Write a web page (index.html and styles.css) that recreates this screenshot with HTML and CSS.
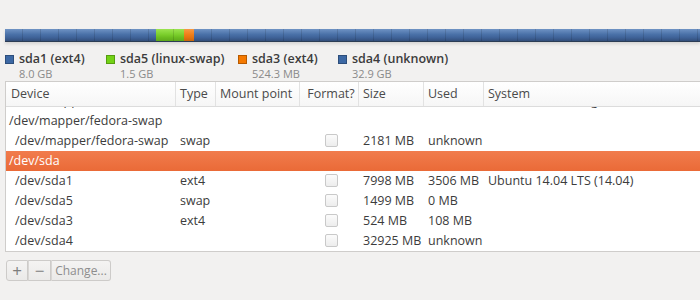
FILE: index.html
```html
<!DOCTYPE html>
<html>
<head>
<meta charset="utf-8">
<link rel="stylesheet" href="styles.css">
</head>
<body>
<div class="page">
  <div class="bar">
    <div class="seg blue" style="width:151px"></div>
    <div class="seg green" style="width:28px"></div>
    <div class="seg orange" style="width:10px"></div>
    <div class="seg blue grow"></div>
  </div>
  <div class="legend">
    <div class="item" style="width:101px">
      <span class="sw blue"></span>
      <div class="lbl"><div class="name">sda1 (ext4)</div><div class="size">8.0 GB</div></div>
    </div>
    <div class="item" style="width:132px">
      <span class="sw green"></span>
      <div class="lbl"><div class="name">sda5 (linux-swap)</div><div class="size">1.5 GB</div></div>
    </div>
    <div class="item" style="width:100px">
      <span class="sw orange"></span>
      <div class="lbl"><div class="name">sda3 (ext4)</div><div class="size">524.3 MB</div></div>
    </div>
    <div class="item">
      <span class="sw blue"></span>
      <div class="lbl"><div class="name">sda4 (unknown)</div><div class="size">32.9 GB</div></div>
    </div>
  </div>
  <div class="table">
    <div class="row head">
      <div class="c dev">Device</div>
      <div class="c typ">Type</div>
      <div class="c mnt">Mount point</div>
      <div class="c fmt">Format?</div>
      <div class="c siz">Size</div>
      <div class="c usd">Used</div>
      <div class="c sys">System</div>
    </div>
    <div class="body">
      <div class="rows">
        <div class="row">
          <div class="c dev ind">/dev/mapper/fedora-root</div>
          <div class="c typ"></div>
          <div class="c mnt"></div>
          <div class="c fmt"></div>
          <div class="c siz"></div>
          <div class="c usd"></div>
          <div class="c sys">Fedora (Heisenbug) (20)</div>
        </div>
        <div class="row">
          <div class="c dev">/dev/mapper/fedora-swap</div>
        </div>
        <div class="row">
          <div class="c dev ind">/dev/mapper/fedora-swap</div>
          <div class="c typ">swap</div>
          <div class="c mnt"></div>
          <div class="c fmt"><span class="cb"></span></div>
          <div class="c siz">2181 MB</div>
          <div class="c usd">unknown</div>
          <div class="c sys"></div>
        </div>
        <div class="row sel">
          <div class="c dev">/dev/sda</div>
        </div>
        <div class="row">
          <div class="c dev ind">/dev/sda1</div>
          <div class="c typ">ext4</div>
          <div class="c mnt"></div>
          <div class="c fmt"><span class="cb"></span></div>
          <div class="c siz">7998 MB</div>
          <div class="c usd">3506 MB</div>
          <div class="c sys">Ubuntu 14.04 LTS (14.04)</div>
        </div>
        <div class="row">
          <div class="c dev ind">/dev/sda5</div>
          <div class="c typ">swap</div>
          <div class="c mnt"></div>
          <div class="c fmt"><span class="cb"></span></div>
          <div class="c siz">1499 MB</div>
          <div class="c usd">0 MB</div>
          <div class="c sys"></div>
        </div>
        <div class="row">
          <div class="c dev ind">/dev/sda3</div>
          <div class="c typ">ext4</div>
          <div class="c mnt"></div>
          <div class="c fmt"><span class="cb"></span></div>
          <div class="c siz">524 MB</div>
          <div class="c usd">108 MB</div>
          <div class="c sys"></div>
        </div>
        <div class="row">
          <div class="c dev ind">/dev/sda4</div>
          <div class="c typ"></div>
          <div class="c mnt"></div>
          <div class="c fmt"><span class="cb"></span></div>
          <div class="c siz">32925 MB</div>
          <div class="c usd">unknown</div>
          <div class="c sys"></div>
        </div>
      </div>
    </div>
  </div>
  <div class="buttons">
    <div class="btn sq">+</div>
    <div class="btn sq">−</div>
    <div class="btn txt">Change...</div>
  </div>
</div>
</body>
</html>
```
FILE: styles.css
```css
html, body {
  margin: 0;
  padding: 0;
  background: #f2f1f0;
  width: 700px;
  height: 300px;
  overflow: hidden;
}
.page {
  font-family: "Open Sans", "DejaVu Sans", sans-serif;
  font-size: 12.5px;
  color: #3c3c3c;
  padding: 29px 0 0 5px;
}
.bar {
  display: flex;
  height: 12px;
  border-bottom: 1px solid #2c3d55;
  box-shadow: 0 2px 3px rgba(0,0,0,0.12);
}
.seg {
  height: 12px;
  background-image: repeating-linear-gradient(90deg, transparent 0 17px, rgba(0,0,0,0.12) 17px 18px),
    linear-gradient(#6f93c4, #4a71a8 45%, #3f6399 70%, #334f7a);
}
.seg.green {
  background-image: repeating-linear-gradient(90deg, transparent 0 17px, rgba(0,0,0,0.12) 17px 18px),
    linear-gradient(#9be34f, #7ccf2d 45%, #6bbd20 70%, #5ea81b);
}
.seg.orange {
  background-image: linear-gradient(#f69a44, #f07f1a 45%, #e47410 70%, #c9650c);
}
.seg.grow { flex: 1; }
.legend {
  display: flex;
  margin-top: 8px;
  height: 31px;
}
.item {
  display: flex;
  gap: 5px;
  white-space: nowrap;
}
.sw {
  width: 9px;
  height: 9px;
  margin-top: 5px;
  border: 1px solid rgba(0,0,0,0.25);
  box-sizing: border-box;
}
.sw.blue { background: #3c68a4; }
.sw.green { background: #73d216; }
.sw.orange { background: #f57900; }
.lbl .name {
  font-weight: 600;
  color: #3c3c3c;
  line-height: 17px;
  font-size: 12.5px;
}
.lbl .size {
  color: #8a8a8a;
  font-size: 11px;
  line-height: 13px;
}
.table {
  border-top: 1px solid #cfcdcb;
  border-left: 1px solid #cfcdcb;
  border-bottom: 1px solid #cfcdcb;
  background: #ffffff;
}
.row {
  display: flex;
  height: 20px;
  line-height: 20px;
  white-space: nowrap;
}
.row.head {
  height: 24px;
  line-height: 24px;
  background: linear-gradient(#ffffff, #f6f6f6);
  border-bottom: 1px solid #dcdcdc;
  color: #4a4a4a;
  position: relative;
  z-index: 1;
}
.row.head .c {
  border-right: 1px solid #e2e2e2;
}
.row.head .sys { border-right: none; }
.c {
  box-sizing: border-box;
  padding-left: 4px;
  overflow: hidden;
}
.dev { width: 170px; padding-left: 3px; }
.dev.ind { padding-left: 9px; }
.typ { width: 40px; }
.mnt { width: 84px; }
.fmt { width: 59px; text-align: center; }
.siz { width: 65px; }
.usd { width: 60px; }
.sys { flex: 1; }
.row.head .dev { padding-left: 5px; }
.body {
  height: 144px;
  overflow: hidden;
}
.rows {
  margin-top: -16px;
}
.row.sel {
  background: linear-gradient(#f17c4d, #ea6a37);
  color: #ffffff;
}
.cb {
  display: inline-block;
  width: 11px;
  height: 11px;
  border: 1px solid #c9c9c9;
  border-radius: 2px;
  background: linear-gradient(#fbfbfb, #ededed);
  vertical-align: -2px;
}
.buttons {
  display: flex;
  margin-top: 8px;
  margin-left: 1px;
}
.btn {
  height: 21px;
  line-height: 20px;
  box-sizing: border-box;
  border: 1px solid #cdcbc9;
  background: linear-gradient(#f4f3f2, #ebeae9);
  color: #7d7d7d;
  text-align: center;
}
.btn.sq { width: 23px; font-size: 17px; }
.btn.sq:first-child { border-radius: 3px 0 0 3px; width: 22px; }
.btn + .btn { border-left: 1px solid #d8d6d4; }
.btn.txt { width: 60px; border-radius: 0 3px 3px 0; font-size: 12px; color: #8d8d8d; }
```
